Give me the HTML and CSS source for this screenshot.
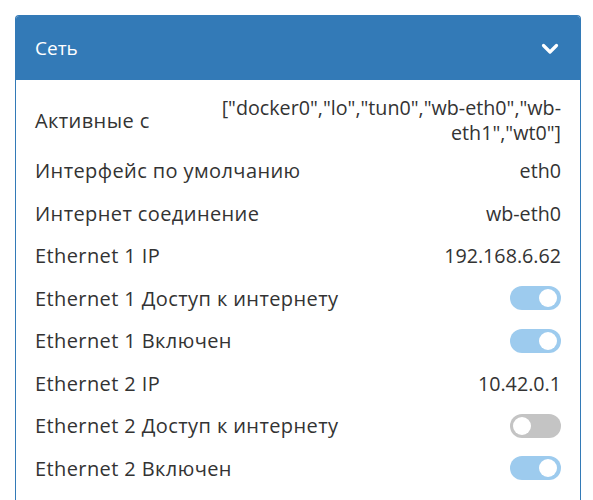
FILE: index.html
```html
<!DOCTYPE html>
<html lang="ru">
<head>
<meta charset="utf-8">
<link rel="stylesheet" href="styles.css">
</head>
<body>
<div class="panel">
  <div class="panel-heading">
    <span class="title">Сеть</span>
    <svg class="chevron" width="18" height="12" viewBox="0 0 18 12"><path d="M2.5 2.5 L9 9 L15.5 2.5" fill="none" stroke="#fff" stroke-width="3.2" stroke-linecap="round" stroke-linejoin="round"/></svg>
  </div>
  <div class="panel-body">
    <div class="row"><span class="label">Активные с</span><span class="value multi">["docker0","lo","tun0","wb-eth0","wb-eth1","wt0"]</span></div>
    <div class="row"><span class="label">Интерфейс по умолчанию</span><span class="value">eth0</span></div>
    <div class="row"><span class="label">Интернет соединение</span><span class="value">wb-eth0</span></div>
    <div class="row"><span class="label">Ethernet 1 IP</span><span class="value">192.168.6.62</span></div>
    <div class="row"><span class="label">Ethernet 1 Доступ к интернету</span><span class="toggle on"><span class="knob"></span></span></div>
    <div class="row"><span class="label">Ethernet 1 Включен</span><span class="toggle on"><span class="knob"></span></span></div>
    <div class="row"><span class="label">Ethernet 2 IP</span><span class="value">10.42.0.1</span></div>
    <div class="row"><span class="label">Ethernet 2 Доступ к интернету</span><span class="toggle off"><span class="knob"></span></span></div>
    <div class="row"><span class="label">Ethernet 2 Включен</span><span class="toggle on"><span class="knob"></span></span></div>
  </div>
</div>
</body>
</html>
```
FILE: styles.css
```css
html, body { margin: 0; padding: 0; background: #fff; }
body {
  font-family: "Open Sans", "Noto Sans", sans-serif;
  color: #333;
  padding: 15px 12px 0 15px;
  height: 500px;
  box-sizing: border-box;
  overflow: hidden;
}
.panel {
  border: 1px solid #337ab7;
  border-bottom: 0;
  border-radius: 4px 4px 0 0;
  height: 485px;
  box-sizing: border-box;
  width: 566px;
}
.panel-heading {
  background: #337ab7;
  color: #fff;
  height: 64px;
  box-sizing: border-box;
  padding: 0 21px 0 19px;
  display: flex;
  align-items: center;
  justify-content: space-between;
  border-radius: 3px 3px 0 0;
}
.title { font-size: 19px; }
.chevron { display: block; margin-top: 1px; }
.panel-body { padding: 10.5px 19px 0 19px; }
.row {
  display: flex;
  justify-content: space-between;
  align-items: center;
  min-height: 42.5px;
  box-sizing: border-box;
  padding: 4.5px 0;
  line-height: 25px;
}
.label { font-size: 20px; letter-spacing: 0.4px; }
.value { font-size: 19.7px; text-align: right; }
.value.multi { width: 340px; }
.toggle {
  width: 51px;
  height: 24px;
  border-radius: 12px;
  display: flex;
  align-items: center;
  padding: 0 3.5px;
  box-sizing: border-box;
  margin-right: 0.5px;
}
.toggle.on { background: #9dcbee; justify-content: flex-end; }
.toggle.off { background: #c4c4c4; justify-content: flex-start; }
.knob {
  width: 18px;
  height: 18px;
  border-radius: 50%;
  background: #fff;
}
```
